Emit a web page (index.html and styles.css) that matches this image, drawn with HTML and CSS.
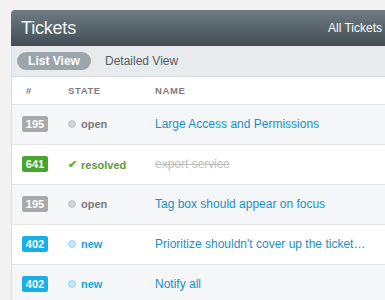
FILE: index.html
```html
<!DOCTYPE html>
<html lang="en">
<head>
  <meta charset="UTF-8" />
  <title>Tickets</title>
  <link rel="stylesheet" href="styles.css">
</head>
<body>
  <div class="panel">
    <div class="panel-head">
      <h1>Tickets</h1>
      <span class="scope">All Tickets</span>
    </div>
    <div class="tabs">
      <span class="tab active">List View</span>
      <span class="tab">Detailed View</span>
    </div>
    <table class="tickets">
      <thead>
        <tr>
          <th class="col-num">#</th>
          <th class="col-state">State</th>
          <th>Name</th>
        </tr>
      </thead>
      <tbody>
        <tr>
          <td><span class="badge open">195</span></td>
          <td><span class="state open"><i class="dot"></i>open</span></td>
          <td><a href="#">Large Access and Permissions</a></td>
        </tr>
        <tr>
          <td><span class="badge resolved">641</span></td>
          <td><span class="state resolved"><i class="check">&#10004;</i>resolved</span></td>
          <td><span class="done">export service</span></td>
        </tr>
        <tr>
          <td><span class="badge open">195</span></td>
          <td><span class="state open"><i class="dot"></i>open</span></td>
          <td><a href="#">Tag box should appear on focus</a></td>
        </tr>
        <tr>
          <td><span class="badge new">402</span></td>
          <td><span class="state new"><i class="dot"></i>new</span></td>
          <td><a href="#">Prioritize shouldn't cover up the ticket…</a></td>
        </tr>
        <tr>
          <td><span class="badge new">402</span></td>
          <td><span class="state new"><i class="dot"></i>new</span></td>
          <td><a href="#">Notify all</a></td>
        </tr>
      </tbody>
    </table>
  </div>
</body>
</html>
```

FILE: styles.css
```css
* {
  box-sizing: border-box;
}

html, body {
  margin: 0;
  padding: 0;
  background: #f2f2f2;
  font-family: 'Liberation Sans', Arial, sans-serif;
  overflow: hidden;
}

body {
  padding: 10px 0 0 11px;
}

.panel {
  width: 374px;
  background: #fff;
  border-left: 1px solid #d9dcde;
  border-radius: 5px 0 0 0;
}

.panel-head {
  height: 36px;
  display: flex;
  align-items: center;
  justify-content: space-between;
  padding: 0 3px 0 10px;
  background: linear-gradient(to bottom, #6e7c82, #414d53);
  border-radius: 4px 0 0 0;
  margin-left: -1px;
}

.panel-head h1 {
  margin: 0;
  font-size: 18px;
  font-weight: normal;
  color: #f1f4f5;
  letter-spacing: -0.2px;
}

.scope {
  font-size: 12px;
  color: #fff;
}

.tabs {
  height: 31px;
  display: flex;
  align-items: center;
  gap: 14px;
  padding-left: 5px;
  background: #e7ebed;
  border-bottom: 1px solid #d6dadc;
}

.tab {
  font-size: 12px;
  color: #555d61;
}

.tab.active {
  width: 74px;
  height: 18px;
  line-height: 18px;
  text-align: center;
  border-radius: 9px;
  background: #9ba6ac;
  color: #fff;
  font-weight: bold;
}

.tickets {
  width: 100%;
  border-collapse: collapse;
}

.tickets th {
  height: 27px;
  text-align: left;
  font-size: 9.5px;
  font-weight: bold;
  color: #7d7d7d;
  text-transform: uppercase;
  letter-spacing: 0.6px;
  padding: 0;
  border-bottom: 1px solid #e3e5e6;
}

.tickets th.col-num {
  width: 56px;
  padding-left: 14px;
}

.tickets th.col-state {
  width: 87px;
}

.tickets td {
  height: 40px;
  padding: 0;
  border-bottom: 1px solid #e3e5e6;
  font-size: 12px;
  white-space: nowrap;
}

.tickets td:first-child {
  padding-left: 10px;
}

.tickets tbody tr:nth-child(odd) td {
  background: #f4f6f7;
}

.badge {
  display: inline-block;
  width: 26px;
  height: 16px;
  line-height: 16px;
  text-align: center;
  border-radius: 2px;
  color: #fff;
  font-size: 11px;
  font-weight: bold;
}

.badge.open { background: #a9a9a9; }
.badge.resolved { background: #48a52d; }
.badge.new { background: #18afe7; }

.state {
  display: inline-flex;
  align-items: center;
  gap: 5px;
  font-size: 11px;
  font-weight: bold;
}

.state.open { color: #7a7a7a; }
.state.resolved { color: #5a9e3a; }
.state.new { color: #1ba3d6; }

.dot {
  width: 8px;
  height: 8px;
  border-radius: 50%;
}

.state.open .dot { background: #d3d3d3; border: 1px solid #c6c6c6; }
.state.new .dot { background: #bde8f7; border: 1px solid #9fd9ee; }

.check {
  font-style: normal;
  font-size: 11px;
  width: 8px;
  color: #6cb043;
}

.tickets a {
  color: #1b8fc4;
  text-decoration: none;
}

.done {
  color: #bdbdbd;
  text-decoration: line-through;
}
```
